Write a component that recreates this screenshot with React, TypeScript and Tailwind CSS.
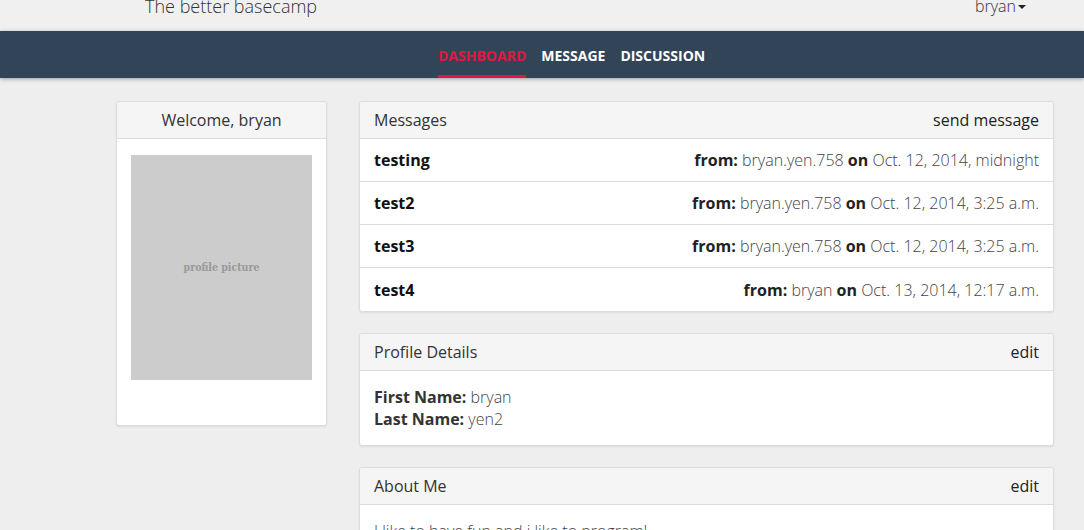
import React from "react";

type Message = { title: string; from: string; on: string };

const MESSAGES: Message[] = [
  { title: "testing", from: "bryan.yen.758", on: "Oct. 12, 2014, midnight" },
  { title: "test2", from: "bryan.yen.758", on: "Oct. 12, 2014, 3:25 a.m." },
  { title: "test3", from: "bryan.yen.758", on: "Oct. 12, 2014, 3:25 a.m." },
  { title: "test4", from: "bryan", on: "Oct. 13, 2014, 12:17 a.m." },
];

const NAV = ["Dashboard", "Message", "Discussion"];

function Card({ title, action, center, children }: { title: string; action?: string; center?: boolean; children: React.ReactNode }) {
  return (
    <div className="bg-white border border-[#dcdcdc] rounded-[3px] shadow-[0_1px_2px_rgba(0,0,0,0.08)]">
      <div
        className={`h-[37px] bg-[#f5f5f5] border-b border-[#dcdcdc] rounded-t-[3px] px-[14px] flex items-center text-[16px] font-normal text-[#333] ${
          center ? "justify-center" : "justify-between"
        }`}
      >
        <span>{title}</span>
        {action && <span className="text-[#222]">{action}</span>}
      </div>
      {children}
    </div>
  );
}

export default function App() {
  return (
    <div className="min-h-[530px] bg-[#eeeeee] font-['Open_Sans',sans-serif] overflow-hidden">
      {/* Top strip */}
      <div className="h-[31px] bg-[#f0f0f0] relative">
        <div className="absolute left-[145px] top-[-6px] text-[18px] font-light text-[#333] leading-[25px]">The better basecamp</div>
        <div className="absolute left-[975px] top-[-5px] text-[16px] font-light text-[#333] leading-[22px] flex items-center">
          bryan
          <span className="ml-[2px] mt-[2px] w-0 h-0 border-l-[4px] border-r-[4px] border-t-[4px] border-l-transparent border-r-transparent border-t-[#222]" />
        </div>
      </div>

      {/* Nav */}
      <div className="h-[47px] bg-[#324558] shadow-[0_1px_4px_rgba(0,0,0,0.35)] relative z-10 flex items-stretch pl-[438px] gap-[15px]">
        {NAV.map((n, i) => (
          <div
            key={n}
            className={`flex items-center uppercase font-bold text-[14px] pt-[5px] border-b-[3px] ${
              i === 0 ? "text-[#e0173f] border-[#e0173f]" : "text-white border-transparent"
            }`}
          >
            {n}
          </div>
        ))}
      </div>

      {/* Content */}
      <div className="flex gap-[32px] pl-[116px] pt-[23px]">
        <div className="w-[211px] shrink-0 self-start">
          <Card title="Welcome, bryan" center>
            <div className="px-[14px] pt-[16px] pb-[45px]">
              <div className="w-[181px] h-[225px] bg-[#cccccc] flex items-center justify-center">
                <span className="font-['DejaVu_Serif_Condensed',serif] font-bold text-[10.5px] text-[#999]">profile picture</span>
              </div>
            </div>
          </Card>
        </div>

        <div className="w-[695px] shrink-0 flex flex-col gap-[21px]">
          <Card title="Messages" action="send message">
            {MESSAGES.map((m, i) => (
              <div
                key={m.title}
                className={`h-[43px] px-[14px] flex items-center justify-between text-[16px] ${
                  i < MESSAGES.length - 1 ? "border-b border-[#dcdcdc]" : ""
                }`}
              >
                <span className="font-bold text-[#111]">{m.title}</span>
                <span className="font-light text-[#444]">
                  <b className="font-bold text-[#222]">from:</b> {m.from} <b className="font-bold text-[#222]">on</b> {m.on}
                </span>
              </div>
            ))}
          </Card>

          <Card title="Profile Details" action="edit">
            <div className="px-[14px] py-[15px] text-[16px] leading-[22px] font-light text-[#444]">
              <div>
                <b className="font-bold text-[#333]">First Name:</b> bryan
              </div>
              <div>
                <b className="font-bold text-[#333]">Last Name:</b> yen2
              </div>
            </div>
          </Card>

          <Card title="About Me" action="edit">
            <div className="px-[14px] py-[15px] text-[16px] leading-[22px] font-light text-[#444]">
              I like to have fun and i like to program!
            </div>
          </Card>
        </div>
      </div>
    </div>
  );
}
